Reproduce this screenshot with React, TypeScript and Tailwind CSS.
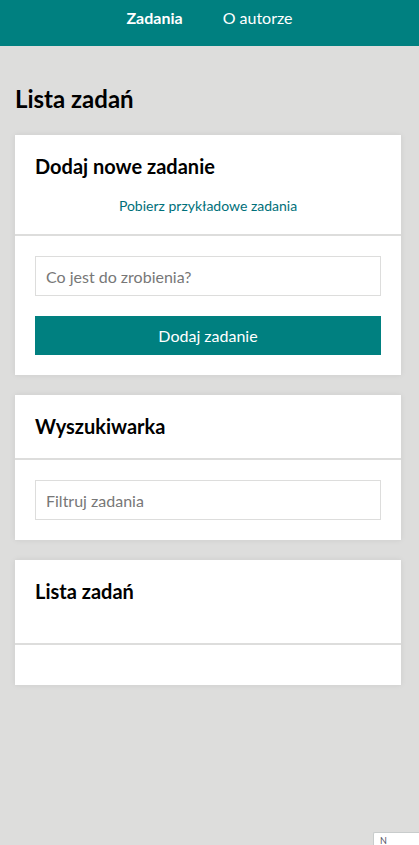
export default function App() {
  return (
    <div className="min-h-[845px] bg-[#dddddc] font-['Lato',_sans-serif] relative">
      <nav className="h-[46px] bg-[#008080] flex items-start justify-center gap-10 pt-[8px] text-white text-[16px] leading-[20px]">
        <a className="font-bold">Zadania</a>
        <a>O autorze</a>
      </nav>

      <main className="pl-[15px] pr-[18px]">
        <h1 className="text-[24px] font-bold text-black pt-[37px] pb-[20px] leading-[32px]">Lista zadań</h1>

        <section className="bg-white shadow-[0_0_6px_rgba(0,0,0,0.08)] mb-5">
          <div className="px-5 pt-[19px] pb-[17px] border-b-2 border-[#dddddc]">
            <h2 className="text-[20px] font-bold leading-[24px] text-black">Dodaj nowe zadanie</h2>
            <div className="text-center mt-[15px]">
              <a className="text-[14px] text-[#00707a] leading-[20px]">Pobierz przykładowe zadania</a>
            </div>
          </div>
          <div className="p-5">
            <input
              placeholder="Co jest do zrobienia?"
              className="w-full h-10 border border-[#dddddc] px-[10px] text-[16px] placeholder:text-[#777] outline-none"
            />
            <button className="w-full h-[39px] mt-5 bg-[#008080] text-white text-[16px]">Dodaj zadanie</button>
          </div>
        </section>

        <section className="bg-white shadow-[0_0_6px_rgba(0,0,0,0.08)] mb-5">
          <div className="px-5 pt-[19px] pb-[20px] border-b-2 border-[#dddddc]">
            <h2 className="text-[20px] font-bold leading-[24px] text-black">Wyszukiwarka</h2>
          </div>
          <div className="p-5">
            <input
              placeholder="Filtruj zadania"
              className="w-full h-10 border border-[#dddddc] px-[10px] text-[16px] placeholder:text-[#777] outline-none"
            />
          </div>
        </section>

        <section className="bg-white shadow-[0_0_6px_rgba(0,0,0,0.08)]">
          <div className="px-5 pt-[19px] pb-[40px] border-b-2 border-[#dddddc]">
            <h2 className="text-[20px] font-bold leading-[24px] text-black">Lista zadań</h2>
          </div>
          <div className="h-10" />
        </section>
      </main>

      <div className="absolute left-[373px] top-[832px] w-[46px] h-[13px] bg-white border-l border-t border-[#c8cccc] rounded-tl-[2px] overflow-hidden text-[9px] text-[#556] pl-[6px] pt-[2px] leading-[11px]">
        N
      </div>
    </div>
  );
}
